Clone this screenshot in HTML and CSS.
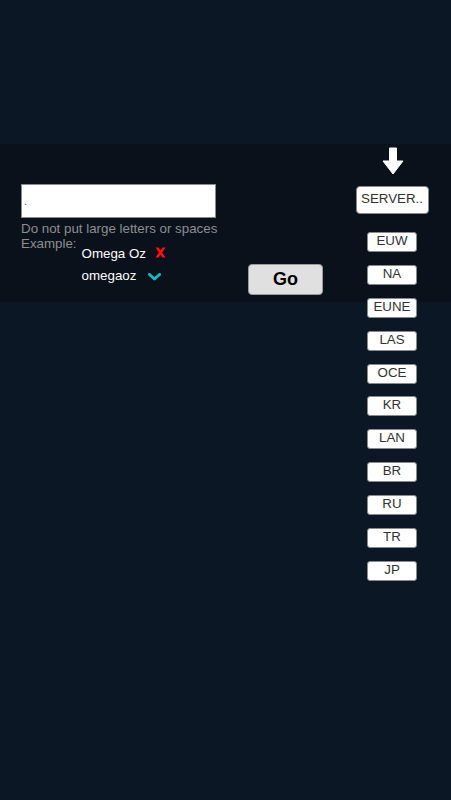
FILE: index.html
```html
<!DOCTYPE html>
<html lang="en">
<head>
<meta charset="utf-8">
<title>Summoner search</title>
<link rel="stylesheet" href="styles.css">
</head>
<body>
<main class="page">
  <section class="band">
    <div class="form">
      <input class="name-input" type="text" value=".">
      <p class="hint">Do not put large letters or spaces</p>
      <div class="example">
        <span class="example-label">Example:</span>
        <div class="example-list">
          <div class="example-row">
            <span>Omega Oz</span>
            <svg class="icon-x" width="11" height="11" viewBox="0 0 11 11"><path d="M0.5 0.5 H3.6 L5.5 3.6 L7.4 0.5 H10.5 L7.1 5.5 L10.5 10.5 H7.4 L5.5 7.4 L3.6 10.5 H0.5 L3.9 5.5 Z" fill="#ff1010"/></svg>
          </div>
          <div class="example-row">
            <span>omegaoz</span>
            <svg class="icon-check" width="13" height="8" viewBox="0 0 13 8"><path d="M1.5 1.5 L6.5 6 L11.5 1.5" stroke="#19b6c6" stroke-width="3" fill="none" stroke-linecap="round" stroke-linejoin="round"/></svg>
          </div>
        </div>
      </div>
    </div>
    <div class="go-col">
      <button class="go-btn" type="button">Go</button>
    </div>
    <div class="servers">
      <svg class="arrow" width="22" height="28" viewBox="0 0 22 28"><path d="M7.5 1 H14.5 V14 H21 L11 27 L1 14 H7.5 Z" fill="#ffffff" stroke="#ffffff" stroke-width="1" stroke-linejoin="round"/></svg>
      <button class="server-btn" type="button">SERVER..</button>
      <ul class="server-list">
        <li><button class="region-btn" type="button">EUW</button></li>
        <li><button class="region-btn" type="button">NA</button></li>
        <li><button class="region-btn" type="button">EUNE</button></li>
        <li><button class="region-btn" type="button">LAS</button></li>
        <li><button class="region-btn" type="button">OCE</button></li>
        <li><button class="region-btn" type="button">KR</button></li>
        <li><button class="region-btn" type="button">LAN</button></li>
        <li><button class="region-btn" type="button">BR</button></li>
        <li><button class="region-btn" type="button">RU</button></li>
        <li><button class="region-btn" type="button">TR</button></li>
        <li><button class="region-btn" type="button">JP</button></li>
      </ul>
    </div>
  </section>
</main>
</body>
</html>
```

FILE: styles.css
```css
* { box-sizing: border-box; }
html, body {
  margin: 0;
  padding: 0;
  background: #0c1726;
  font-family: "Liberation Sans", Arial, sans-serif;
  font-size: 13.333px;
}
.page {
  min-height: 800px;
  padding-top: 144px;
}
.band {
  background: #0b111b;
  height: 158px;
  display: flex;
  align-items: flex-start;
}
.form {
  padding-left: 21px;
  padding-top: 40px;
  width: 227px;
}
.name-input {
  display: block;
  width: 195px;
  height: 34px;
  margin: 0;
  border: 1px solid #8a8a8a;
  background: #ffffff;
  color: #555;
  font-family: "Liberation Sans", Arial, sans-serif;
  font-size: 11px;
  padding: 0 2px;
}
.hint {
  margin: 3px 0 0;
  color: #8c8e91;
  line-height: 15.33px;
  white-space: nowrap;
}
.example {
  display: flex;
  gap: 5px;
  color: #8c8e91;
  line-height: 15.33px;
}
.example-list {
  margin-top: 9.5px;
  display: flex;
  flex-direction: column;
  gap: 7px;
  color: #ffffff;
}
.example-row {
  display: flex;
  align-items: center;
  gap: 9px;
  height: 15.33px;
}
.icon-x { margin-top: -1px; }
.example-row + .example-row { gap: 12px; }
.icon-check { margin-top: 2px; }
.go-col {
  margin-left: 21px;
  padding-top: 120px;
}
.go-btn {
  width: 75px;
  height: 31px;
  margin: 0;
  padding: 0;
  border: 1px solid #9b9b9b;
  border-radius: 4px;
  background: #e0e0e0;
  color: #000;
  font-family: "Liberation Sans", Arial, sans-serif;
  font-weight: bold;
  font-size: 18px;
}
.servers {
  margin-left: 17px;
  width: 104px;
  padding-top: 3px;
  display: flex;
  flex-direction: column;
  align-items: center;
}
.arrow {
  display: block;
  margin-left: 2px;
}
.server-btn {
  margin-top: 11px;
  width: 73px;
  height: 28px;
  padding: 0 0 3px;
  border: 1px solid #8a8a8a;
  border-radius: 4px;
  background: #ffffff;
  color: #333;
  font-family: "Liberation Sans", Arial, sans-serif;
  font-size: 13.333px;
}
.server-list {
  list-style: none;
  margin: 18px 0 0;
  padding: 0;
  display: flex;
  flex-direction: column;
  gap: 12.9px;
}
.region-btn {
  display: block;
  width: 50px;
  height: 20px;
  padding: 0 0 4px;
  border: 1px solid #8a8a8a;
  border-radius: 3px;
  background: #ffffff;
  color: #333;
  font-family: "Liberation Sans", Arial, sans-serif;
  font-size: 13.333px;
  line-height: 15px;
}
```
